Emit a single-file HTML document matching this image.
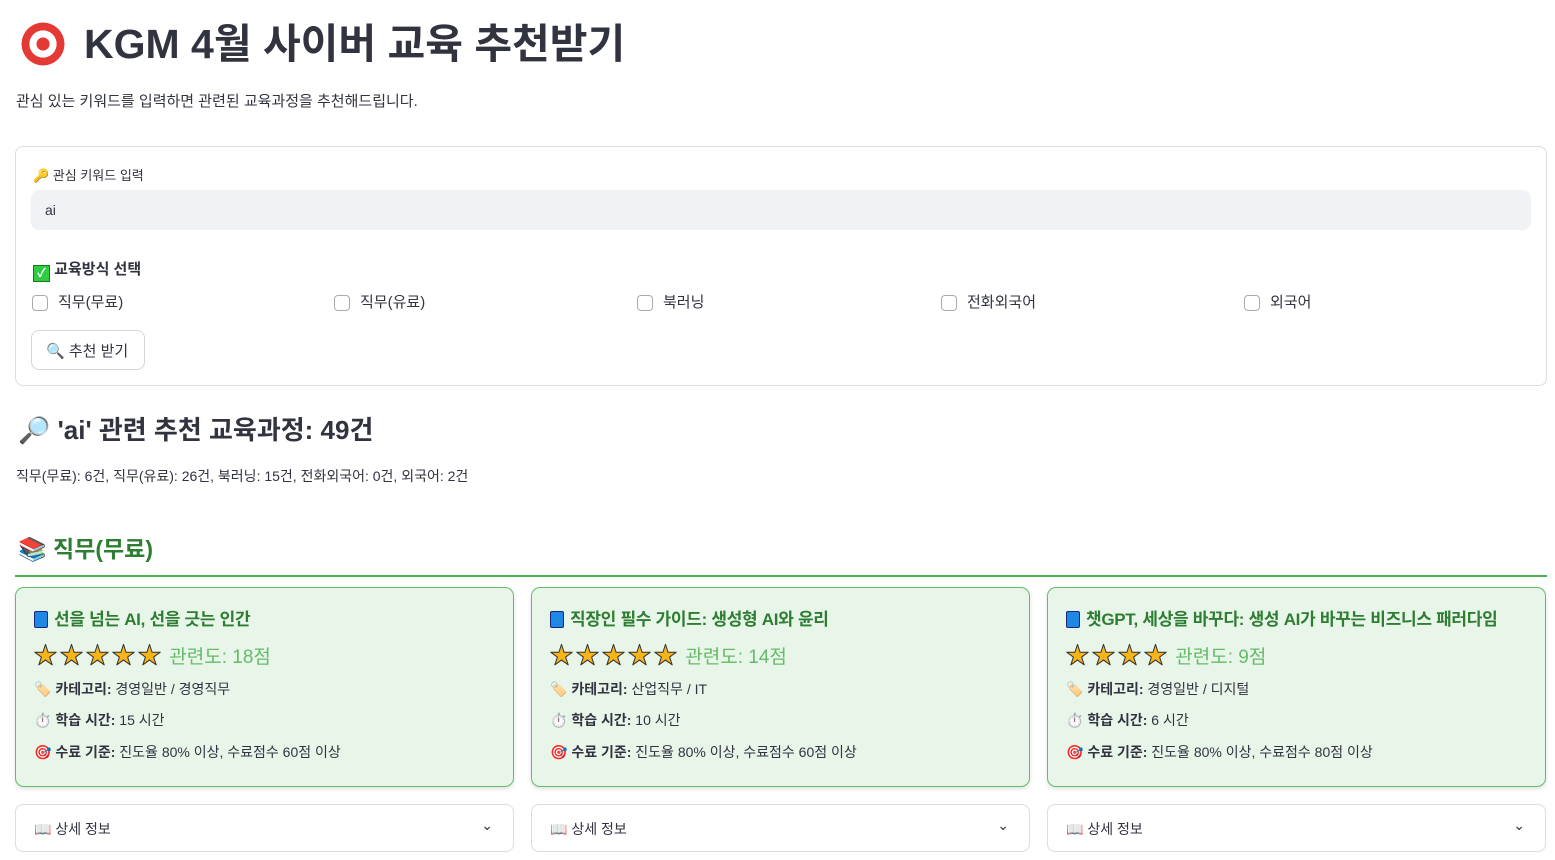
<!DOCTYPE html>
<html><head><meta charset="utf-8"><style>
*{box-sizing:border-box}
body{margin:0;width:1555px;height:860px;overflow:hidden;background:#fff;font-family:"Liberation Sans","Noto Sans CJK KR",sans-serif;color:#31333f}
.abs{position:absolute}
h1{position:absolute;left:18px;top:14px;margin:0;font-size:41px;font-weight:700;line-height:60px;display:flex;align-items:center}
.target{display:inline-block;border-radius:50%;background:radial-gradient(circle,#e53935 0 18%,#fff 19% 38%,#e53935 39% 60%,#fff 61% 72%,#e53935 73% 88%,#222 89%)}
.form{position:absolute;left:15px;top:146px;width:1532px;height:240px;border:1px solid #dcdde2;border-radius:8px}
.cb{display:inline-block;width:16px;height:16px;border:1px solid #aaa;border-radius:4px;vertical-align:middle;margin-right:10px}
.card{position:absolute;top:587px;width:499px;height:200px;background:#e8f5e9;border:1px solid #66bb6a;border-radius:9px;box-shadow:0 2px 4px rgba(0,0,0,.12);padding:0 18px}
.ct{position:absolute;left:18px;top:17px;font-size:17px;font-weight:700;color:#2e7d32;white-space:nowrap;letter-spacing:-0.3px}
.stars{position:absolute;left:18px;top:52px;font-size:19px;color:#66bb6a;line-height:30px}
.star{color:#f5b31c;-webkit-text-stroke:1px #333;font-size:23px;letter-spacing:3px;margin-right:0}
.ln{position:absolute;left:18px;font-size:14px;color:#31333f}
.ln b{font-weight:700}
.exp{position:absolute;top:804px;width:499px;height:48px;border:1px solid #dcdde2;border-radius:8px;font-size:14px;padding:14px 18px}
.book{display:inline-block;width:14px;height:17px;background:#1e88e5;border:1px solid #1a237e;border-radius:2px;vertical-align:-3px;margin-right:6px}
</style></head><body>
<h1><span class="target" style="width:50px;height:50px;margin-right:16px"></span>KGM 4월 사이버 교육 추천받기</h1>
<div class="abs" style="left:16px;top:90px;font-size:15px">관심 있는 키워드를 입력하면 관련된 교육과정을 추천해드립니다.</div>
<div class="form">
 <div class="abs" style="left:17px;top:18px;font-size:13px"><span style="color:#e0a000">🔑</span> 관심 키워드 입력</div>
 <div class="abs" style="left:15px;top:43px;width:1500px;height:40px;background:#f0f2f6;border-radius:8px;padding:12px 14px;font-size:14px">ai</div>
 <div class="abs" style="left:17px;top:111px;font-size:15px;font-weight:700"><span style="display:inline-block;width:17px;height:17px;background:#2ecc40;border:1px solid #1a7a1a;vertical-align:-3px;color:#fff;font-size:12px;text-align:center;line-height:15px">✓</span> 교육방식 선택</div>
 <div class="abs" style="left:16px;top:144px;font-size:15px;width:1500px">
  <span class="abs" style="left:0"><span class="cb"></span>직무(무료)</span>
  <span class="abs" style="left:302px"><span class="cb"></span>직무(유료)</span>
  <span class="abs" style="left:605px"><span class="cb"></span>북러닝</span>
  <span class="abs" style="left:909px"><span class="cb"></span>전화외국어</span>
  <span class="abs" style="left:1212px"><span class="cb"></span>외국어</span>
 </div>
 <div class="abs" style="left:15px;top:183px;width:114px;height:40px;border:1px solid #d6d6d9;border-radius:8px;font-size:15px;padding:9px 14px">🔍 추천 받기</div>
</div>
<div class="abs" style="left:18px;top:410px;font-size:26px;font-weight:700">🔎 'ai' 관련 추천 교육과정: 49건</div>
<div class="abs" style="left:16px;top:466px;font-size:14px">직무(무료): 6건, 직무(유료): 26건, 북러닝: 15건, 전화외국어: 0건, 외국어: 2건</div>
<div class="abs" style="left:18px;top:530px;font-size:23px;font-weight:700;color:#2e7d32">📚 직무(무료)</div>
<div class="abs" style="left:15px;top:575px;width:1532px;height:2px;background:#4caf50"></div>

<div class="card" style="left:15px"><div class="ct"><span class="book"></span>선을 넘는 AI, 선을 긋는 인간</div>
<div class="stars"><span class="star">★★★★★</span> 관련도: 18점</div>
<div class="ln" style="top:91px">🏷️ <b>카테고리:</b> 경영일반 / 경영직무</div>
<div class="ln" style="top:122px">⏱️ <b>학습 시간:</b> 15 시간</div>
<div class="ln" style="top:154px">🎯 <b>수료 기준:</b> 진도율 80% 이상, 수료점수 60점 이상</div></div>

<div class="card" style="left:531px"><div class="ct"><span class="book"></span>직장인 필수 가이드: 생성형 AI와 윤리</div>
<div class="stars"><span class="star">★★★★★</span> 관련도: 14점</div>
<div class="ln" style="top:91px">🏷️ <b>카테고리:</b> 산업직무 / IT</div>
<div class="ln" style="top:122px">⏱️ <b>학습 시간:</b> 10 시간</div>
<div class="ln" style="top:154px">🎯 <b>수료 기준:</b> 진도율 80% 이상, 수료점수 60점 이상</div></div>

<div class="card" style="left:1047px"><div class="ct"><span class="book"></span>챗GPT, 세상을 바꾸다: 생성 AI가 바꾸는 비즈니스 패러다임</div>
<div class="stars"><span class="star">★★★★</span> 관련도: 9점</div>
<div class="ln" style="top:91px">🏷️ <b>카테고리:</b> 경영일반 / 디지털</div>
<div class="ln" style="top:122px">⏱️ <b>학습 시간:</b> 6 시간</div>
<div class="ln" style="top:154px">🎯 <b>수료 기준:</b> 진도율 80% 이상, 수료점수 80점 이상</div></div>

<div class="exp" style="left:15px">📖 상세 정보<span style="position:absolute;right:20px;top:12px">⌄</span></div>
<div class="exp" style="left:531px">📖 상세 정보<span style="position:absolute;right:20px;top:12px">⌄</span></div>
<div class="exp" style="left:1047px">📖 상세 정보<span style="position:absolute;right:20px;top:12px">⌄</span></div>
</body></html>
